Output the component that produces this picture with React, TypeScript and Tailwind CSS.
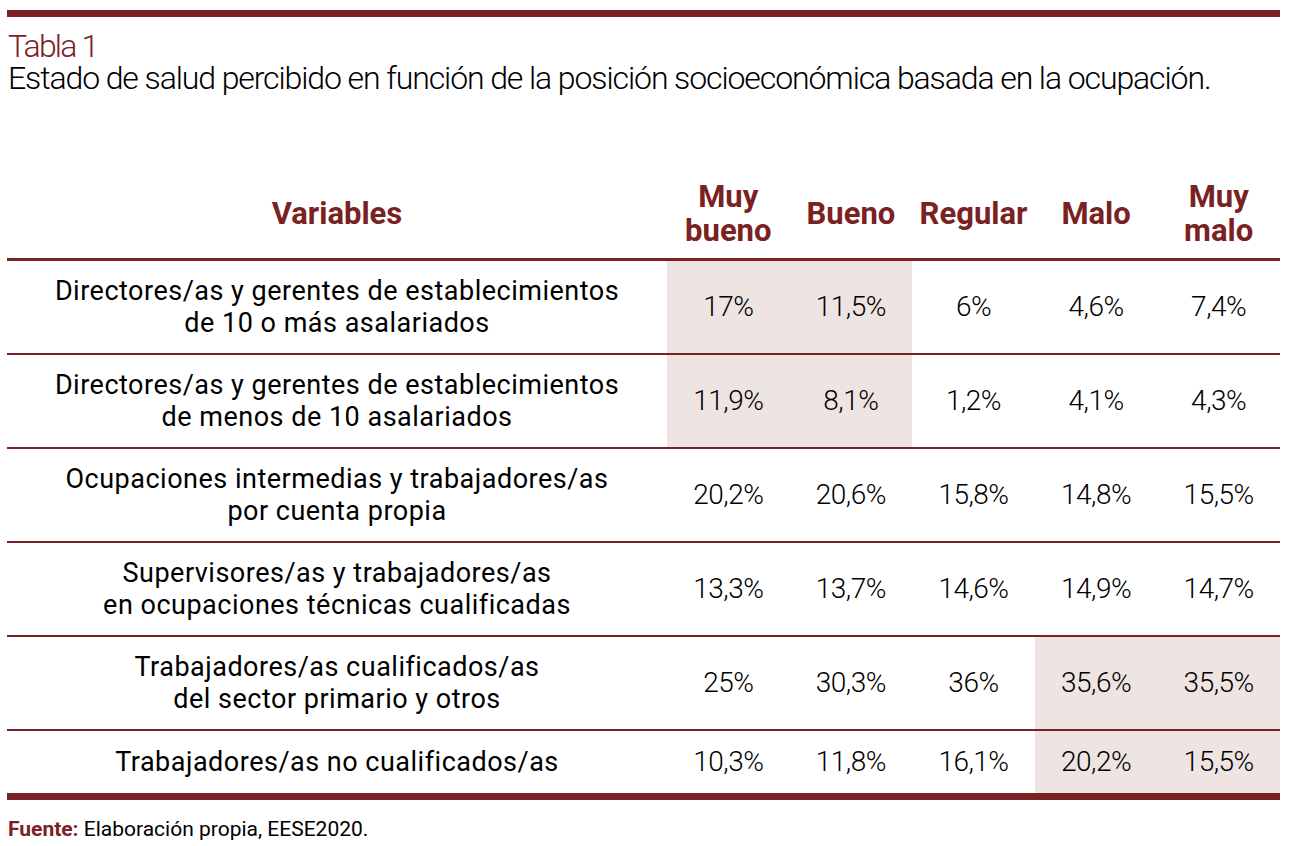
import React from "react";

const rows: { label: string[]; vals: string[]; shade: number[] }[] = [
  {
    label: ["Directores/as y gerentes de establecimientos", "de 10 o más asalariados"],
    vals: ["17%", "11,5%", "6%", "4,6%", "7,4%"],
    shade: [0, 1],
  },
  {
    label: ["Directores/as y gerentes de establecimientos", "de menos de 10 asalariados"],
    vals: ["11,9%", "8,1%", "1,2%", "4,1%", "4,3%"],
    shade: [0, 1],
  },
  {
    label: ["Ocupaciones intermedias y trabajadores/as", "por cuenta propia"],
    vals: ["20,2%", "20,6%", "15,8%", "14,8%", "15,5%"],
    shade: [],
  },
  {
    label: ["Supervisores/as y trabajadores/as", "en ocupaciones técnicas cualificadas"],
    vals: ["13,3%", "13,7%", "14,6%", "14,9%", "14,7%"],
    shade: [],
  },
  {
    label: ["Trabajadores/as cualificados/as", "del sector primario y otros"],
    vals: ["25%", "30,3%", "36%", "35,6%", "35,5%"],
    shade: [3, 4],
  },
  {
    label: ["Trabajadores/as no cualificados/as"],
    vals: ["10,3%", "11,8%", "16,1%", "20,2%", "15,5%"],
    shade: [3, 4],
  },
];

const headers = [["Muy", "bueno"], ["Bueno"], ["Regular"], ["Malo"], ["Muy", "malo"]];

export default function App() {
  return (
    <div className="w-[1290px] h-[846px] bg-white pl-[7px] pr-[10px] pt-[10px] text-black [font-family:Roboto,'Liberation_Sans',sans-serif]">
      <div className="h-[7px] bg-[#7a2123]" />
      <div className="mt-[13px] pl-[1px]">
        <div className="text-[32px] leading-[32px] font-light text-[#7a2123] tracking-[-1.8px]">Tabla 1</div>
        <div className="text-[32px] leading-[32px] font-light tracking-[-1.1px] whitespace-nowrap">
          Estado de salud percibido en función de la posición socioeconómica basada en la ocupación.
        </div>
      </div>
      <div className="mt-[76px]">
        <div className="grid grid-cols-[660px_repeat(5,1fr)] h-[88px] items-center text-[#7a2123] font-bold text-[31px] leading-[34px]">
          <div className="text-center">Variables</div>
          {headers.map((h, i) => (
            <div key={i} className="text-center">
              {h.map((l, j) => (
                <div key={j}>{l}</div>
              ))}
            </div>
          ))}
        </div>
        <div className="h-[3px] bg-[#7a2123]" />
        {rows.map((r, ri) => {
          const last = ri === rows.length - 1;
          return (
            <div key={ri}>
              <div
                className={`grid grid-cols-[660px_repeat(5,1fr)] ${last ? "h-[62px]" : "h-[92px]"} text-[27px] leading-[32px]`}
              >
                <div className="flex flex-col items-center justify-center text-center tracking-[0.5px]">
                  {r.label.map((l, j) => (
                    <div key={j}>{l}</div>
                  ))}
                </div>
                {r.vals.map((v, vi) => (
                  <div
                    key={vi}
                    className={`flex items-center justify-center font-light text-[28px] tracking-[-0.5px] ${r.shade.includes(vi) ? "bg-[#eee4e2]" : ""}`}
                  >
                    {v}
                  </div>
                ))}
              </div>
              <div className={last ? "h-[7px] bg-[#7a2123]" : "h-[2px] bg-[#7a2123]"} />
            </div>
          );
        })}
        <div className="mt-[16px] pl-[1px] text-[21px] leading-[26px]">
          <span className="font-bold text-[#7a2123]">Fuente:</span> Elaboración propia, EESE2020.
        </div>
      </div>
    </div>
  );
}
